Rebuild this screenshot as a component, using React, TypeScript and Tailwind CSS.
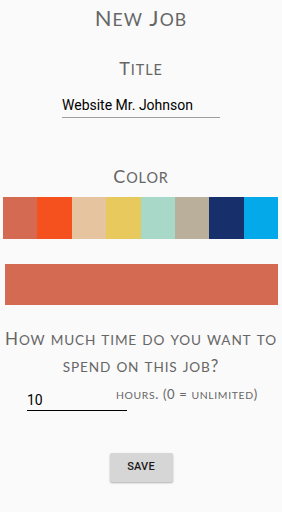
import React, { useState } from 'react';

const colors = ['#d46a52', '#f4511e', '#e6c49f', '#e8c95e', '#a8d8c8', '#baaf9b', '#17306b', '#03a9e8'];

// small caps by hand: lowercase runs become smaller uppercase
function SC({ text, size }: { text: string; size: number }) {
    const parts = text.match(/[a-z]+|[^a-z]+/g) || [];
    return (
        <>
            {parts.map((p, i) =>
                /[a-z]/.test(p[0]) ? (
                    <span key={i} style={{ fontSize: size * 0.8 }}>{p.toUpperCase()}</span>
                ) : (
                    <span key={i}>{p}</span>
                )
            )}
        </>
    );
}

export default function App() {
    const [title, setTitle] = useState('Website Mr. Johnson');
    const [hours, setHours] = useState('10');
    const [selected, setSelected] = useState(0);

    const heading = "[font-family:Lato,'Open_Sans',sans-serif] text-[#666666] tracking-[0.05em]";

    return (
        <div className="w-[282px] h-[512px] bg-[#fafafa] flex flex-col items-center [font-family:Roboto,sans-serif]">
            <h1 className={`${heading} text-[22px] leading-[28px] mt-[4px]`}><SC text="New Job" size={22} /></h1>

            <h2 className={`${heading} text-[18px] leading-[24px] mt-[22px]`}><SC text="Title" size={18} /></h2>
            <input
                value={title}
                onChange={e => setTitle(e.target.value)}
                className="mt-[12px] w-[158px] ml-[0px] h-[24px] text-[14px] text-black bg-transparent border-b border-[#9e9e9e] outline-none leading-[20px] pb-[1px]"
            />

            <h2 className={`${heading} text-[18px] leading-[24px] mt-[46px]`}><SC text="Color" size={18} /></h2>
            <div className="mt-[7px] w-[275px] ml-[-1px] h-[42px] flex">
                {colors.map((c, i) => (
                    <button key={c} onClick={() => setSelected(i)} className="flex-1 h-full" style={{ backgroundColor: c }} />
                ))}
            </div>
            <div className="mt-[25px] w-[273px] h-[41px]" style={{ backgroundColor: colors[selected] }} />

            <p className={`${heading} text-[17px] leading-[25px] text-center mt-[21px] px-[2px]`}>
                <SC text="How much time do you want to spend on this job?" size={17} />
            </p>

            <div className="w-full flex items-start mt-[7px] px-[27px]">
                <div className="w-[100px] flex flex-col">
                    <input
                        value={hours}
                        onChange={e => setHours(e.target.value)}
                        className="h-[24px] pt-[3px] text-[14px] text-black bg-transparent border-b-[1.5px] border-black outline-none caret-black"
                    />
                </div>
                <span className={`${heading} text-[13px] leading-[16px] ml-[-11px] mt-[-1px] whitespace-nowrap`}>
                    <SC text="hours. (0 = unlimited)" size={13} />
                </span>
            </div>

            <button className="mt-[42px] w-[63px] h-[29px] bg-[#d6d6d6] rounded-[2px] shadow-[0_1px_2px_rgba(0,0,0,0.3)] text-[11px] font-medium text-[#1a1a1a] tracking-[0.02em]">
                SAVE
            </button>
        </div>
    );
}
